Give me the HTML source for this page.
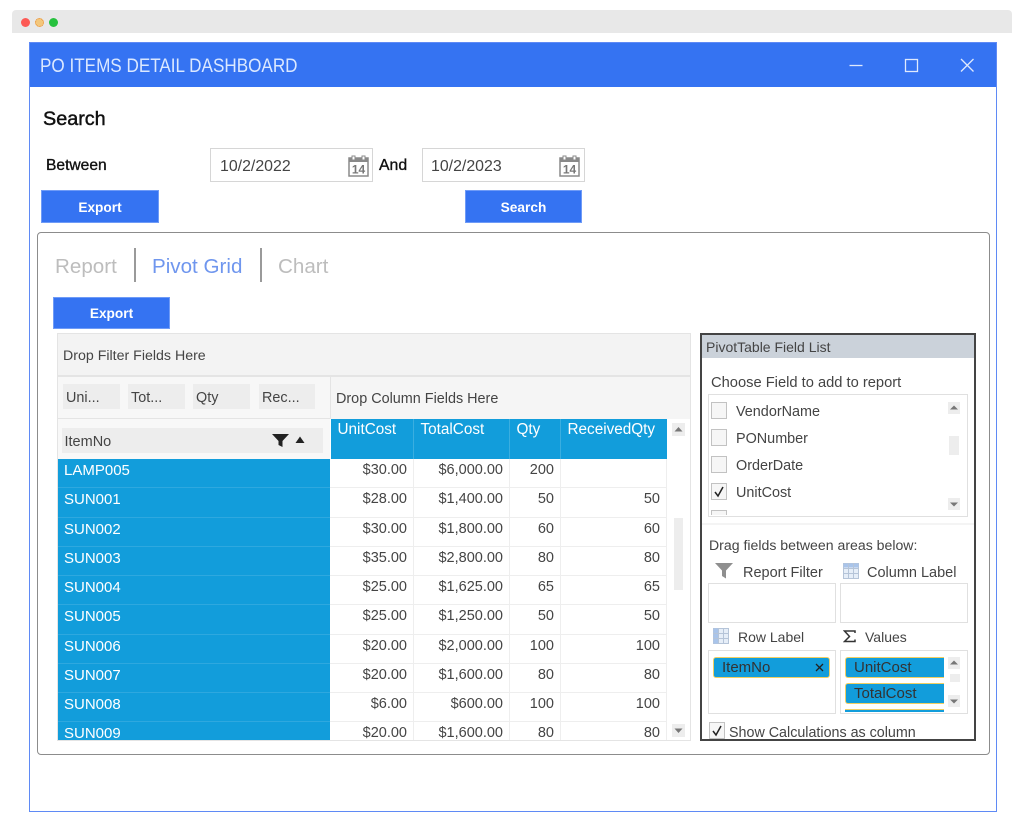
<!DOCTYPE html>
<html lang="en">
<head>
<meta charset="utf-8">
<title>PO Items Detail Dashboard</title>
<style>
html,body{margin:0;padding:0;background:#fff;width:1024px;height:838px;overflow:hidden}
body{position:relative;font-family:"Liberation Sans",sans-serif;color:#444}
div,span,svg{box-sizing:border-box}
.a{position:absolute}
.t{position:absolute;white-space:nowrap;line-height:20px;height:20px}
.btn{position:absolute;background:#3573f2;border:1px solid #6f9bf7;color:#fff;font-weight:bold;font-size:13.7px;line-height:30px;text-align:center}
.inp{position:absolute;background:#fff;border:1.5px solid #d6d6d6}
.chip{position:absolute;background:#ededed}
.box{position:absolute;background:#fff;border:1.5px solid #e0e0e0}
.cb{position:absolute;width:16px;height:17px;border:1.5px solid #c2c2c2;background:#f6f6f6}
.sb{position:absolute;background:#ededed}
.bc{position:absolute;height:21px;background:#129ddb;border:1px solid #f0cf62;border-radius:3px;color:#333;font-size:15px;line-height:19px;padding-left:8px}
.r{position:absolute;left:0;width:609px;height:29.25px;font-size:14.5px;line-height:23px}
.r>div{position:absolute;top:0;height:29.25px;border-bottom:1px solid #eee;border-right:1px solid #eee;text-align:right;padding-right:6px}
.r>.k{left:0;width:272px;background:#129ddb;color:#fff;text-align:left;padding-left:6px;font-size:15px;border-right:0;border-bottom:1px solid #2ea8df}
.r>.c1{left:272px;width:84px}
.r>.c2{left:356px;width:96px}
.r>.c3{left:452px;width:51px}
.r>.c4{left:503px;width:106px}
.h{position:absolute;top:419px;height:40px;background:#129ddb;color:#fff;font-size:15.3px;line-height:22px;padding-left:6.500px;border-right:1px solid #3aaee0}
</style>
</head>
<body>

<!-- browser chrome -->
<div class="a" style="left:12px;top:10px;width:1000px;height:23px;background:#e8e8e8;border-radius:4px 4px 0 0"></div>
<div class="a" style="left:20.500px;top:17.500px;width:9px;height:9px;border-radius:50%;background:#fd5a55"></div>
<div class="a" style="left:34.500px;top:17.500px;width:9px;height:9px;border-radius:50%;background:#f3c77c;border:1px dotted #e8892e"></div>
<div class="a" style="left:48.500px;top:17.500px;width:9px;height:9px;border-radius:50%;background:#27c13e"></div>

<!-- window -->
<div class="a" style="left:29px;top:42px;width:968px;height:770px;border:1.5px solid #5f8af5;background:#fff"></div>
<div class="a" style="left:30px;top:43px;width:966px;height:43.500px;background:#3573f2"></div>
<div class="t" style="left:40px;top:56px;color:#dbe8ff;font-size:19.5px;transform:scaleX(.877);transform-origin:left center">PO ITEMS DETAIL DASHBOARD</div>
<svg class="a" style="left:845px;top:55px" width="135" height="20" viewBox="0 0 135 20" fill="none" stroke="#dfe9fd" stroke-width="1.3">
  <path d="M4.500 10.500H17.500"/>
  <rect x="60.500" y="4.500" width="12" height="12"/>
  <path d="M116 4L128.500 16.500M128.500 4L116 16.500"/>
</svg>

<!-- search -->
<div class="t" style="left:43px;top:108.500px;color:#111;font-size:19.8px;-webkit-text-stroke:.45px #111">Search</div>
<div class="t" style="left:46px;top:156px;color:#111;font-size:15.6px;-webkit-text-stroke:.35px #111">Between</div>

<div class="inp" style="left:210px;top:148px;width:163px;height:34px"></div>
<div class="t" style="left:220px;top:156.500px;font-size:15.9px">10/2/2022</div>
<svg class="a" style="left:348px;top:155px" width="21" height="22" viewBox="0 0 21 22">
  <rect x="1" y="3" width="19" height="18" fill="#fff" stroke="#8a8a8a" stroke-width="1.500"/>
  <rect x="1" y="3" width="19" height="4" fill="#8a8a8a"/>
  <rect x="4" y="1" width="3" height="4" fill="#fff" stroke="#8a8a8a"/>
  <rect x="14" y="1" width="3" height="4" fill="#fff" stroke="#8a8a8a"/>
  <text x="10.500" y="18.500" font-size="12" font-weight="bold" font-family="Liberation Sans" fill="#777" text-anchor="middle">14</text>
</svg>
<div class="t" style="left:379px;top:156px;color:#111;font-size:15.8px;-webkit-text-stroke:.35px #111">And</div>

<div class="inp" style="left:422px;top:148px;width:163px;height:34px"></div>
<div class="t" style="left:431px;top:156.500px;font-size:15.9px">10/2/2023</div>
<svg class="a" style="left:559px;top:155px" width="21" height="22" viewBox="0 0 21 22">
  <rect x="1" y="3" width="19" height="18" fill="#fff" stroke="#8a8a8a" stroke-width="1.500"/>
  <rect x="1" y="3" width="19" height="4" fill="#8a8a8a"/>
  <rect x="4" y="1" width="3" height="4" fill="#fff" stroke="#8a8a8a"/>
  <rect x="14" y="1" width="3" height="4" fill="#fff" stroke="#8a8a8a"/>
  <text x="10.500" y="18.500" font-size="12" font-weight="bold" font-family="Liberation Sans" fill="#777" text-anchor="middle">14</text>
</svg>

<div class="btn" style="left:41px;top:190px;width:118px;height:33px;line-height:33px">Export</div>
<div class="btn" style="left:465px;top:190px;width:117px;height:33px;line-height:33px">Search</div>

<!-- panel -->
<div class="a" style="left:37px;top:232px;width:953px;height:523px;border:1.5px solid #8c8c8c;border-radius:4px;background:#fff"></div>
<div class="t" style="left:55px;top:256.500px;font-size:20.6px;color:#bdbdbd">Report</div>
<div class="a" style="left:134px;top:248px;width:1.500px;height:34px;background:#9a9a9a"></div>
<div class="t" style="left:152px;top:256.500px;font-size:20.6px;color:#6f96ee">Pivot Grid</div>
<div class="a" style="left:260px;top:248px;width:1.500px;height:34px;background:#9a9a9a"></div>
<div class="t" style="left:278px;top:256.500px;font-size:20.6px;color:#bdbdbd">Chart</div>
<div class="btn" style="left:53px;top:297px;width:117px;height:32px;line-height:32px">Export</div>

<!-- pivot grid -->
<div class="a" style="left:57px;top:333px;width:634px;height:408px;border:1.5px solid #e4e4e4;background:#fff"></div>
<div class="a" style="left:58px;top:334px;width:632px;height:41px;background:#f3f3f3"></div>
<div class="a" style="left:58px;top:375px;width:632px;height:1.500px;background:#e4e4e4"></div>
<div class="t" style="left:63px;top:346px;font-size:14.2px">Drop Filter Fields Here</div>

<div class="a" style="left:58px;top:376.500px;width:272px;height:42.500px;background:#f7f7f7"></div>
<div class="a" style="left:330px;top:376px;width:1.500px;height:43px;background:#e4e4e4"></div>
<div class="a" style="left:331px;top:376.500px;width:359px;height:42.500px;background:#f5f5f5"></div>
<div class="chip" style="left:63px;top:384px;width:57px;height:25px"></div>
<div class="t" style="left:66px;top:388px;font-size:14.4px">Uni...</div>
<div class="chip" style="left:128px;top:384px;width:57px;height:25px"></div>
<div class="t" style="left:131px;top:388px;font-size:14.4px">Tot...</div>
<div class="chip" style="left:193px;top:384px;width:57px;height:25px"></div>
<div class="t" style="left:196px;top:388px;font-size:14.4px">Qty</div>
<div class="chip" style="left:259px;top:384px;width:56px;height:25px"></div>
<div class="t" style="left:262px;top:388px;font-size:14.4px">Rec...</div>
<div class="t" style="left:336px;top:389px;font-size:14.4px">Drop Column Fields Here</div>

<div class="a" style="left:58px;top:418px;width:272px;height:41px;background:#f8f8f8;border-top:1px solid #e4e4e4"></div>
<div class="chip" style="left:62px;top:428px;width:261px;height:25px"></div>
<div class="t" style="left:64.500px;top:432px;font-size:14.500px">ItemNo</div>
<svg class="a" style="left:271px;top:433px" width="36" height="15" viewBox="0 0 36 15">
  <path d="M1 1H18L11.500 8V14L7.500 12V8Z" fill="#222"/>
  <path d="M29 3.500L33.500 10H24.500Z" fill="#222"/>
</svg>

<div class="h" style="left:331px;width:83px">UnitCost</div>
<div class="h" style="left:414px;width:96px">TotalCost</div>
<div class="h" style="left:510px;width:51px">Qty</div>
<div class="h" style="left:561px;width:106px;border-right:0">ReceivedQty</div>

<div class="a" style="left:58px;top:459px;width:609px;height:281px;overflow:hidden">
  <div class="r" style="top:0"><div class="k">LAMP005</div><div class="c1">$30.00</div><div class="c2">$6,000.00</div><div class="c3">200</div><div class="c4"></div></div>
  <div class="r" style="top:29.250px"><div class="k">SUN001</div><div class="c1">$28.00</div><div class="c2">$1,400.00</div><div class="c3">50</div><div class="c4">50</div></div>
  <div class="r" style="top:58.500px"><div class="k">SUN002</div><div class="c1">$30.00</div><div class="c2">$1,800.00</div><div class="c3">60</div><div class="c4">60</div></div>
  <div class="r" style="top:87.750px"><div class="k">SUN003</div><div class="c1">$35.00</div><div class="c2">$2,800.00</div><div class="c3">80</div><div class="c4">80</div></div>
  <div class="r" style="top:117px"><div class="k">SUN004</div><div class="c1">$25.00</div><div class="c2">$1,625.00</div><div class="c3">65</div><div class="c4">65</div></div>
  <div class="r" style="top:146.250px"><div class="k">SUN005</div><div class="c1">$25.00</div><div class="c2">$1,250.00</div><div class="c3">50</div><div class="c4">50</div></div>
  <div class="r" style="top:175.500px"><div class="k">SUN006</div><div class="c1">$20.00</div><div class="c2">$2,000.00</div><div class="c3">100</div><div class="c4">100</div></div>
  <div class="r" style="top:204.750px"><div class="k">SUN007</div><div class="c1">$20.00</div><div class="c2">$1,600.00</div><div class="c3">80</div><div class="c4">80</div></div>
  <div class="r" style="top:234px"><div class="k">SUN008</div><div class="c1">$6.00</div><div class="c2">$600.00</div><div class="c3">100</div><div class="c4">100</div></div>
  <div class="r" style="top:263.250px"><div class="k">SUN009</div><div class="c1">$20.00</div><div class="c2">$1,600.00</div><div class="c3">80</div><div class="c4">80</div></div>
</div>

<!-- grid scrollbar -->
<div class="sb" style="left:672px;top:423px;width:13px;height:13px"></div>
<svg class="a" style="left:672px;top:423px" width="13" height="13"><path d="M6.500 4L10.500 8.500H2.500Z" fill="#777"/></svg>
<div class="sb" style="left:674px;top:518px;width:9px;height:72px"></div>
<div class="sb" style="left:672px;top:724px;width:13px;height:13px"></div>
<svg class="a" style="left:672px;top:724px" width="13" height="13"><path d="M6.500 9L10.500 4.500H2.500Z" fill="#777"/></svg>

<!-- field list -->
<div class="a" style="left:700px;top:333px;width:276px;height:408px;border:2px solid #444;background:#fff"></div>
<div class="a" style="left:702px;top:335px;width:272px;height:23px;background:#cbd2da"></div>
<div class="t" style="left:706px;top:337px;font-size:14px">PivotTable Field List</div>
<div class="t" style="left:711px;top:373px;font-size:14.7px">Choose Field to add to report</div>

<div class="box" style="left:708px;top:394px;width:260px;height:123px"></div>
<div class="cb" style="left:711px;top:402px"></div>
<div class="t" style="left:736px;top:402px;font-size:14.4px">VendorName</div>
<div class="cb" style="left:711px;top:429px"></div>
<div class="t" style="left:736px;top:429px;font-size:14.4px">PONumber</div>
<div class="cb" style="left:711px;top:456px"></div>
<div class="t" style="left:736px;top:456px;font-size:14.4px">OrderDate</div>
<div class="cb" style="left:711px;top:483px"></div>
<svg class="a" style="left:711px;top:483px" width="16" height="17"><path d="M4 9L7 13L12 4" fill="none" stroke="#222" stroke-width="1.500"/></svg>
<div class="t" style="left:736px;top:483px;font-size:14.4px">UnitCost</div>
<div class="a" style="left:711px;top:510px;width:16px;height:5px;border:1.5px solid #c2c2c2;border-bottom:0;background:#f6f6f6"></div>

<div class="sb" style="left:948px;top:402px;width:12px;height:12px"></div>
<svg class="a" style="left:948px;top:402px" width="12" height="12"><path d="M6 3.500L10 7.500H2Z" fill="#777"/></svg>
<div class="sb" style="left:949px;top:436px;width:10px;height:19px"></div>
<div class="sb" style="left:948px;top:498px;width:12px;height:12px"></div>
<svg class="a" style="left:948px;top:498px" width="12" height="12"><path d="M6 8.500L10 4.500H2Z" fill="#777"/></svg>

<div class="a" style="left:702px;top:523px;width:272px;height:1.500px;background:#f4f4f4"></div>
<div class="t" style="left:709px;top:535px;font-size:14.1px">Drag fields between areas below:</div>

<svg class="a" style="left:715px;top:563px" width="18" height="16"><path d="M0 0H18L11 7.500V15.500L7 13V7.500Z" fill="#8f8f8f"/></svg>
<div class="t" style="left:743px;top:563px;font-size:14.5px">Report Filter</div>
<svg class="a" style="left:843px;top:563px" width="16" height="16" fill="none">
  <rect x=".5" y=".5" width="15" height="15" fill="#e6eef8" stroke="#b5c4d8"/>
  <rect x=".5" y=".5" width="15" height="4" fill="#a9c4ea"/>
  <path d="M5.500 .5V15.500M10.500 .5V15.500M.5 5.500H15.500M.5 10.500H15.500" stroke="#b5c4d8"/>
</svg>
<div class="t" style="left:867px;top:563px;font-size:14.5px">Column Label</div>

<div class="box" style="left:708px;top:583px;width:128px;height:40px"></div>
<div class="box" style="left:840px;top:583px;width:128px;height:40px"></div>

<svg class="a" style="left:713px;top:628px" width="16" height="16" fill="none">
  <rect x=".5" y=".5" width="15" height="15" fill="#e6eef8" stroke="#b5c4d8"/>
  <rect x=".5" y=".5" width="5" height="15" fill="#a9c4ea"/>
  <path d="M5.500 .5V15.500M10.500 .5V15.500M.5 5.500H15.500M.5 10.500H15.500" stroke="#b5c4d8"/>
</svg>
<div class="t" style="left:738px;top:627px;font-size:14px">Row Label</div>
<svg class="a" style="left:843px;top:630px" width="13" height="13" fill="none"><path d="M12 3V1H1.500L6.500 6.500L1.500 11.500H12V9.500" stroke="#333" stroke-width="1.500"/></svg>
<div class="t" style="left:865px;top:627px;font-size:14px">Values</div>

<div class="box" style="left:708px;top:650px;width:128px;height:64px"></div>
<div class="box" style="left:840px;top:650px;width:128px;height:64px"></div>
<div class="bc" style="left:713px;top:657px;width:117px">ItemNo</div>
<svg class="a" style="left:815px;top:663px" width="9" height="9"><path d="M1 1L8 8M8 1L1 8" stroke="#222" stroke-width="1.300"/></svg>
<div class="bc" style="left:845px;top:657px;width:99px;border-right:0;border-radius:3px 0 0 3px">UnitCost</div>
<div class="bc" style="left:845px;top:683px;width:99px;border-right:0;border-radius:3px 0 0 3px">TotalCost</div>
<div class="a" style="left:845px;top:709px;width:99px;height:3px;background:#129ddb;border-top:1px solid #f0cf62"></div>

<div class="sb" style="left:948px;top:657px;width:12px;height:12px"></div>
<svg class="a" style="left:948px;top:657px" width="12" height="12"><path d="M6 3.500L10 7.500H2Z" fill="#777"/></svg>
<div class="sb" style="left:950px;top:674px;width:10px;height:8px"></div>
<div class="sb" style="left:948px;top:695px;width:12px;height:12px"></div>
<svg class="a" style="left:948px;top:695px" width="12" height="12"><path d="M6 8.500L10 4.500H2Z" fill="#777"/></svg>

<div class="cb" style="left:709px;top:722px"></div>
<svg class="a" style="left:709px;top:722px" width="16" height="17"><path d="M4 9L7 13L12 4" fill="none" stroke="#222" stroke-width="1.500"/></svg>
<div class="t" style="left:729px;top:723px;font-size:14.3px">Show Calculations as column</div>

</body>
</html>
